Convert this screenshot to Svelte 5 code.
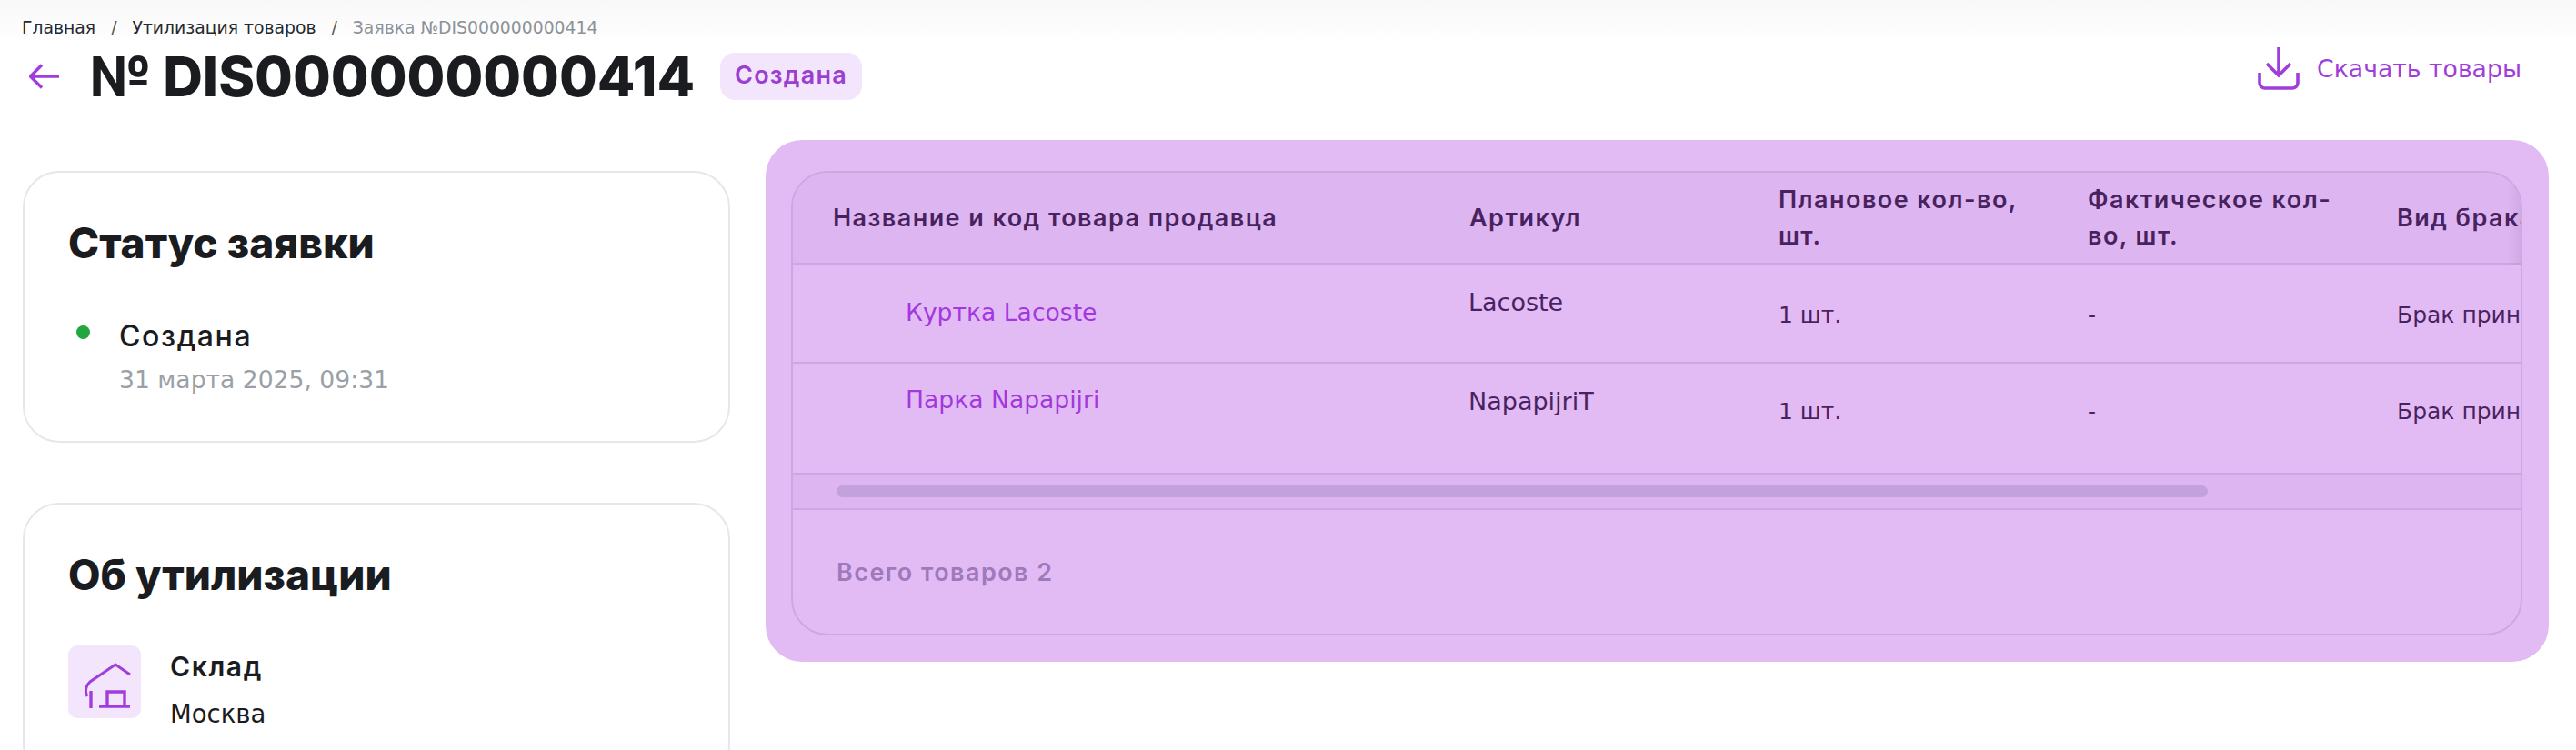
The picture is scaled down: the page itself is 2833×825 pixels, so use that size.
<script>
  const columns = [
    "Название и код товара продавца",
    "Артикул",
    "Плановое кол-во, шт.",
    "Фактическое кол-во, шт.",
    "Вид брака"
  ];

  const rows = [
    { name: "Куртка Lacoste", article: "Lacoste", planned: "1 шт.", actual: "-", kind: "Брак принят" },
    { name: "Парка Napapijri", article: "NapapijriT", planned: "1 шт.", actual: "-", kind: "Брак принят" }
  ];
</script>

<div class="page">
  <nav class="crumbs">
    <span>Главная</span>
    <i>/</i>
    <span>Утилизация товаров</span>
    <i>/</i>
    <span class="current">Заявка №DIS000000000414</span>
  </nav>

  <header class="top">
    <svg class="back" width="34" height="28" viewBox="0 0 34 28" fill="none">
      <path d="M33 14H2M14 1.5 1.5 14 14 26.5" stroke="#a03ddb" stroke-width="3.4" />
    </svg>
    <h1>№ DIS000000000414</h1>
    <span class="badge">Создана</span>
    <button class="download">
      <svg width="46" height="47" viewBox="0 0 46 47" fill="none">
        <path d="M23 0v31M10 18l13 13 13-13" stroke="#a03ddb" stroke-width="3.6" />
        <path d="M2 28v11a6 6 0 0 0 6 6h30a6 6 0 0 0 6-6V28" stroke="#a03ddb" stroke-width="3.6" />
      </svg>
      Скачать товары
    </button>
  </header>

  <div class="content">
    <aside>
      <section class="card status">
        <h2>Статус заявки</h2>
        <div class="step">
          <span class="dot"></span>
          <div>
            <div class="step-name">Создана</div>
            <div class="step-date">31 марта 2025, 09:31</div>
          </div>
        </div>
      </section>

      <section class="card">
        <h2>Об утилизации</h2>
        <div class="info">
          <span class="info-icon">
            <svg width="80" height="80" viewBox="0 0 80 80" fill="none">
              <path d="M21 56c-3-6-2-11 3-16L52 21l16 11" stroke="#a03ddb" stroke-width="3" />
              <path d="M25 50v19M34 67h34M43 67V51h19v16" stroke="#a03ddb" stroke-width="3.4" />
            </svg>
          </span>
          <div>
            <div class="info-title">Склад</div>
            <div class="info-value">Москва</div>
          </div>
        </div>
      </section>
    </aside>

    <main class="table-wrap">
      <div class="table">
        <div class="grid head">
          {#each columns as col}
            <div class="cell">{col}</div>
          {/each}
        </div>
        {#each rows as row, i}
          <div class="grid row" class:tall={i === 1}>
            <div class="cell link">{row.name}</div>
            <div class="cell article">{row.article}</div>
            <div class="cell qty">{row.planned}</div>
            <div class="cell qty">{row.actual}</div>
            <div class="cell qty">{row.kind}</div>
          </div>
        {/each}
        <div class="scroll"><div class="thumb"></div></div>
        <div class="total">Всего товаров 2</div>
        <div class="shade"></div>
      </div>
    </main>
  </div>
</div>

<style>
  :global(body) {
    margin: 0;
    height: 825px;
    overflow: hidden;
    background: linear-gradient(#f8f8f8, #fff 50px);
    font-family: "DejaVu Sans", sans-serif;
    color: #1a1c1f;
  }
  .page {
    padding: 18px 59px 0 24px;
  }
  .crumbs {
    display: flex;
    gap: 17px;
    align-items: center;
    height: 24px;
    font-size: 18.8px;
    color: #26282c;
  }
  .crumbs i {
    font-style: normal;
    color: #555;
  }
  .crumbs .current {
    color: #8d9299;
  }
  .top {
    display: flex;
    align-items: center;
    height: 64px;
    margin-top: 10px;
  }
  .back {
    margin: 0 33px 0 8px;
  }
  h1 {
    margin: 0;
    font-family: Inter, sans-serif;
    font-size: 60.5px;
    font-weight: 800;
    line-height: 64px;
  }
  .badge {
    margin-left: 28px;
    padding: 0 16px;
    height: 52px;
    line-height: 50px;
    border-radius: 16px;
    background: #f3e6fc;
    color: #9a3fd0;
    font-family: Inter, sans-serif;
    font-size: 27px;
    font-weight: 600;
    letter-spacing: 1.2px;
  }
  .download {
    display: flex;
    align-items: center;
    gap: 19px;
    margin: -18px 1px 0 auto;
    padding: 0;
    border: 0;
    background: none;
    color: #a03ddb;
    font: 400 26.7px "DejaVu Sans", sans-serif;
  }
  .content {
    display: flex;
    align-items: flex-start;
    gap: 67px;
    margin: 72px 0 0 1px;
  }
  aside {
    flex: 0 0 778px;
    display: flex;
    flex-direction: column;
    gap: 66px;
  }
  .card {
    box-sizing: border-box;
    padding: 52px 48px;
    border: 2px solid #e4e7eb;
    border-radius: 40px;
    background: #fff;
  }
  .status {
    height: 299px;
  }
  h2 {
    margin: 0;
    font-family: Inter, sans-serif;
    font-size: 46px;
    font-weight: 800;
    line-height: 50px;
  }
  .step {
    display: flex;
    gap: 32px;
    margin-top: 56px;
  }
  .dot {
    width: 15px;
    height: 15px;
    margin: 10px 0 0 9px;
    border-radius: 50%;
    background: #22a63e;
  }
  .step-name {
    font-family: Inter, sans-serif;
    font-size: 32px;
    font-weight: 500;
    line-height: 44px;
    letter-spacing: 1.6px;
  }
  .step-date {
    margin-top: 6px;
    font-size: 26.6px;
    line-height: 40px;
    color: #9aa0a8;
  }
  .info {
    display: flex;
    gap: 32px;
    margin-top: 53px;
  }
  .info-icon {
    display: flex;
    width: 80px;
    height: 80px;
    border-radius: 10px;
    background: #f3e6fc;
  }
  .info-title {
    font-family: Inter, sans-serif;
    font-size: 30px;
    font-weight: 600;
    line-height: 40px;
    letter-spacing: 1.6px;
    margin-top: 3px;
  }
  .info-value {
    margin-top: 12px;
    font-size: 27.5px;
    line-height: 40px;
  }
  .table-wrap {
    flex: 1;
    min-width: 0;
    position: relative;
  }
  /* selection tint drawn on top of the table */
  .table-wrap::after {
    content: "";
    position: absolute;
    inset: -34px -29px -29px -28px;
    border-radius: 40px;
    background: rgba(167, 49, 224, 0.33);
    pointer-events: none;
  }
  .table {
    position: relative;
    height: 511px;
    box-sizing: border-box;
    border: 2px solid #e0e0e6;
    border-radius: 40px;
    overflow: hidden;
    background: #fff;
  }
  .grid {
    display: grid;
    grid-template-columns: 700px 340px 340px 340px 400px;
    padding-left: 44px;
    border-bottom: 2px solid #e0e0e6;
  }
  .head {
    height: 101px;
    align-items: center;
    box-sizing: border-box;
    background: #f8f8f9;
    font-family: Inter, sans-serif;
    font-size: 27px;
    font-weight: 600;
    line-height: 40px;
    letter-spacing: 1.45px;
  }
  .head .cell {
    padding-right: 40px;
  }
  .row {
    height: 107px;
    font-size: 25px;
  }
  .row.tall {
    height: 120px;
  }
  .link {
    padding: 33px 0 0 80px;
    color: #a03ddb;
    font-size: 26.6px;
    line-height: 40px;
  }
  .article {
    padding-top: 22px;
    font-size: 27px;
    line-height: 40px;
    margin-left: -1px;
  }
  .qty {
    padding-top: 36px;
    line-height: 40px;
    white-space: nowrap;
  }
  .row.tall .link {
    padding-top: 20px;
  }
  .row.tall .qty {
    padding-top: 33px;
  }
  .scroll {
    height: 39px;
    padding: 12px 0 0 48px;
    box-sizing: border-box;
    border-bottom: 2px solid #e0e0e6;
    background: #f8f8f9;
  }
  .thumb {
    width: 1508px;
    height: 13px;
    border-radius: 7px;
    background: #d1d8dc;
  }
  .total {
    padding: 49px 0 0 48px;
    font-family: Inter, sans-serif;
    font-size: 27px;
    font-weight: 600;
    line-height: 40px;
    letter-spacing: 1.45px;
    color: #9a9fa8;
  }
  /* scroll hint at the right end of the header */
  .shade {
    position: absolute;
    top: 0;
    right: 0;
    width: 14px;
    height: 101px;
    background: linear-gradient(to right, transparent, rgba(0, 0, 0, 0.07));
  }
</style>
